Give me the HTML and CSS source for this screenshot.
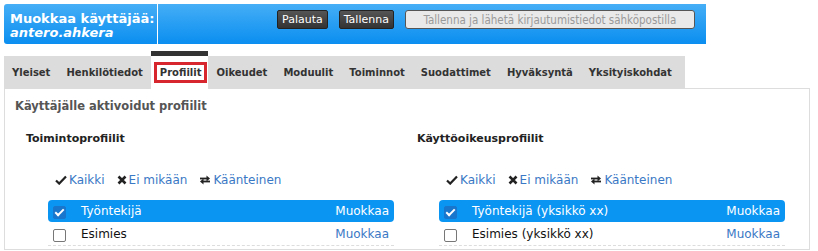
FILE: index.html
```html
<!DOCTYPE html>
<html lang="fi">

<head>
    <meta charset="UTF-8">
    <meta name="viewport" content="width=device-width, initial-scale=1.0">
    <title>Muokkaa käyttäjää</title>
    <link rel="stylesheet" href="styles.css">
</head>

<body>
    <header class="topBar">
        <div class="pageTitle">
            <div>Muokkaa käyttäjää:</div>
            <div class="userName">antero.ahkera</div>
        </div>
        <div class="actions">
            <button class="darkBtn">Palauta</button>
            <button class="darkBtn">Tallenna</button>
            <button class="lightBtn" disabled>Tallenna ja lähetä kirjautumistiedot sähköpostilla</button>
        </div>
    </header>

    <nav class="tabs">
        <a class="tab">Yleiset</a>
        <a class="tab">Henkilötiedot</a>
        <a class="tab active"><span class="focusBox">Profiilit</span></a>
        <a class="tab">Oikeudet</a>
        <a class="tab">Moduulit</a>
        <a class="tab">Toiminnot</a>
        <a class="tab">Suodattimet</a>
        <a class="tab">Hyväksyntä</a>
        <a class="tab">Yksityiskohdat</a>
    </nav>

    <div class="panel">
        <h2 class="panelTitle">Käyttäjälle aktivoidut profiilit</h2>
        <div class="columns">
            <div class="column">
                <h3>Toimintoprofiilit</h3>
                <div class="selectLinks">
                    <a><svg width="12" height="10" viewBox="0 0 12 10"><path d="M1 5.5 L4.2 8.6 L11 1.6" fill="none" stroke="#222" stroke-width="2.2"/></svg>Kaikki</a>
                    <a><svg width="10" height="10" viewBox="0 0 10 10"><path d="M1.5 1.5 L8.5 8.5 M8.5 1.5 L1.5 8.5" stroke="#222" stroke-width="2.6"/></svg>Ei mikään</a>
                    <a><svg width="12" height="10" viewBox="0 0 12 10"><path d="M1 3.5 H8" stroke="#222" stroke-width="1.8"/><path d="M7.5 0.5 L11 3.5 L7.5 6.5 Z" fill="#222"/><path d="M4 6.5 H11" stroke="#222" stroke-width="1.8"/><path d="M4.5 3.5 L1 6.5 L4.5 9.5 Z" fill="#222"/></svg>Käänteinen</a>
                </div>
                <ul class="profileList">
                    <li class="selected"><span class="box checked"></span><span class="name">Työntekijä</span><a>Muokkaa</a></li>
                    <li><span class="box"></span><span class="name">Esimies</span><a>Muokkaa</a></li>
                </ul>
            </div>
            <div class="column">
                <h3>Käyttöoikeusprofiilit</h3>
                <div class="selectLinks">
                    <a><svg width="12" height="10" viewBox="0 0 12 10"><path d="M1 5.5 L4.2 8.6 L11 1.6" fill="none" stroke="#222" stroke-width="2.2"/></svg>Kaikki</a>
                    <a><svg width="10" height="10" viewBox="0 0 10 10"><path d="M1.5 1.5 L8.5 8.5 M8.5 1.5 L1.5 8.5" stroke="#222" stroke-width="2.6"/></svg>Ei mikään</a>
                    <a><svg width="12" height="10" viewBox="0 0 12 10"><path d="M1 3.5 H8" stroke="#222" stroke-width="1.8"/><path d="M7.5 0.5 L11 3.5 L7.5 6.5 Z" fill="#222"/><path d="M4 6.5 H11" stroke="#222" stroke-width="1.8"/><path d="M4.5 3.5 L1 6.5 L4.5 9.5 Z" fill="#222"/></svg>Käänteinen</a>
                </div>
                <ul class="profileList">
                    <li class="selected"><span class="box checked"></span><span class="name">Työntekijä (yksikkö xx)</span><a>Muokkaa</a></li>
                    <li><span class="box"></span><span class="name">Esimies (yksikkö xx)</span><a>Muokkaa</a></li>
                </ul>
            </div>
        </div>
    </div>
</body>

</html>
```

FILE: styles.css
```css
body {
    margin: 0;
    padding: 4px;
    font-family: "DejaVu Sans", Verdana, sans-serif;
    background-color: #fff;
    overflow: hidden;
}

.topBar {
    display: flex;
    width: 702px;
    height: 40px;
    background: linear-gradient(#45aef6, #0a8ef0);
    border-radius: 3px 0 0 3px;
}

.pageTitle {
    width: 147px;
    padding: 8px 0 0 6px;
    border-right: 1px solid #fff;
    color: #fff;
    font-weight: bold;
    font-size: 13px;
    line-height: 14px;
    white-space: nowrap;
}

.userName {
    font-style: italic;
}

.actions {
    display: flex;
    align-items: flex-start;
    padding: 6px 0 0 119px;
}

button {
    font-family: "DejaVu Sans", Verdana, sans-serif;
    font-size: 11px;
    height: 19px;
    padding: 0 4px;
    white-space: nowrap;
    cursor: pointer;
}

.darkBtn {
    background: linear-gradient(#555, #333);
    color: #fff;
    border: 1px solid #222;
    border-radius: 2px;
    margin-right: 11px;
}

.lightBtn {
    width: 290px;
    background-color: #e9e9e9;
    color: #999;
    border: 1px solid #555;
    border-radius: 3px;
    padding: 0 2px;
    font-family: "DejaVu Sans Condensed", "DejaVu Sans", sans-serif;
    font-size: 11.5px;
}

.tabs {
    display: flex;
    align-items: flex-end;
    margin-top: 7px;
    margin-bottom: -1px;
    width: 681px;
    position: relative;
}

.tab {
    display: flex;
    align-items: center;
    height: 33px;
    padding: 0 8px;
    background-color: #dcdcdc;
    color: #333;
    font-size: 10px;
    font-weight: bold;
}

.tab:last-child {
    flex-grow: 1;
}

.tab.active {
    background-color: #fff;
    border-top: 5px solid #333;
    padding: 0 1px 0 3px;
}

.focusBox {
    border: 3px solid #d7262e;
    padding: 2px 3px;
}

.panel {
    width: 804px;
    height: 160px;
    border: 1px solid #ddd;
}

.panelTitle {
    margin: 0;
    padding: 8px 0 0 10px;
    font-size: 11.5px;
    line-height: 18px;
    color: #555;
}

.columns {
    display: grid;
    grid-template-columns: 391px 391px;
    padding: 16px 0 0 21px;
}

.column h3 {
    margin: 0;
    font-size: 11px;
    line-height: 16px;
    color: #222;
}

.selectLinks {
    display: flex;
    gap: 12px;
    padding: 25px 0 0 29px;
    font-size: 12px;
    line-height: 16px;
}

.selectLinks a {
    display: flex;
    align-items: center;
    gap: 2px;
    color: #3a78c5;
}

.profileList {
    list-style: none;
    margin: 12px 0 0 22px;
    padding: 0;
    width: 346px;
    font-size: 12px;
}

.profileList li {
    display: flex;
    align-items: center;
    height: 22px;
    padding: 0 5px;
    border-radius: 4px;
    color: #111;
}

.profileList li + li {
    border-bottom: 1px dashed #ddd;
    border-radius: 0;
    margin-top: 1px;
}

.profileList li.selected {
    background-color: #0a95f3;
    color: #fff;
}

.profileList li.selected a {
    color: #fff;
}

.profileList a {
    margin-left: auto;
    color: #3a78c5;
}

.box {
    width: 11px;
    height: 11px;
    border: 1px solid #777;
    border-radius: 2px;
    background-color: #fff;
    margin: 3px 15px 0 0;
    flex-shrink: 0;
}

.box.checked {
    background-color: #1877cc;
    border-color: #1877cc;
    position: relative;
}

.box.checked::after {
    content: "";
    position: absolute;
    left: 3px;
    top: 0px;
    width: 3px;
    height: 7px;
    border: solid #fff;
    border-width: 0 2px 2px 0;
    transform: rotate(45deg);
}
```
